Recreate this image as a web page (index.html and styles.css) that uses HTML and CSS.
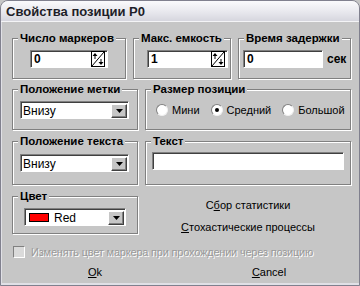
FILE: index.html
```html
<!DOCTYPE html>
<html lang="ru">
<head>
  <meta charset="UTF-8" />
  <title>Свойства позиции P0</title>
  <link rel="stylesheet" href="styles.css">
</head>
<body>

  <div class="window">
    <div class="titlebar">Свойства позиции P0</div>

    <div class="body">

      <!-- top row: three numeric fields -->
      <div class="row-top">
        <div class="group g-count">
          <div class="legend">Число маркеров</div>
          <div class="edit e-count">
            <span class="value">0</span>
            <svg class="spin" width="14" height="16" viewBox="0 0 14 16">
              <rect x="0.5" y="0.5" width="13" height="15" fill="#fff" stroke="#000"/>
              <line x1="1" y1="15" x2="13" y2="1" stroke="#000"/>
              <path d="M4 2 L1.5 5 H3.5 V8 H4.5 V5 H6.5 Z" fill="#000"/>
              <path d="M10 14 L7.5 11 H9.5 V8 H10.5 V11 H12.5 Z" fill="#000"/>
            </svg>
          </div>
        </div>
        <div class="group g-cap">
          <div class="legend">Макс. емкость</div>
          <div class="edit e-cap">
            <span class="value">1</span>
            <svg class="spin" width="14" height="16" viewBox="0 0 14 16">
              <rect x="0.5" y="0.5" width="13" height="15" fill="#fff" stroke="#000"/>
              <line x1="1" y1="15" x2="13" y2="1" stroke="#000"/>
              <path d="M4 2 L1.5 5 H3.5 V8 H4.5 V5 H6.5 Z" fill="#000"/>
              <path d="M10 14 L7.5 11 H9.5 V8 H10.5 V11 H12.5 Z" fill="#000"/>
            </svg>
          </div>
        </div>
        <div class="group g-delay">
          <div class="legend">Время задержки</div>
          <div class="inline">
            <div class="edit e-delay"><span class="value">0</span></div>
            <span class="unit">сек</span>
          </div>
        </div>
      </div>

      <!-- label position / size -->
      <div class="row-grid r2">
        <div class="group">
          <div class="legend">Положение метки</div>
          <div class="combo c-label">
            <span class="combo-text">Внизу</span>
            <span class="drop"><svg width="7" height="4" viewBox="0 0 7 4"><path d="M0 0 H7 L3.5 4 Z" fill="#000"/></svg></span>
          </div>
        </div>
        <div class="group">
          <div class="legend">Размер позиции</div>
          <div class="radios">
            <label class="radio"><span class="dot"></span>Мини</label>
            <label class="radio"><span class="dot on"></span>Средний</label>
            <label class="radio"><span class="dot"></span>Большой</label>
          </div>
        </div>
      </div>

      <!-- text position / text -->
      <div class="row-grid r3">
        <div class="group">
          <div class="legend">Положение текста</div>
          <div class="combo c-text">
            <span class="combo-text">Внизу</span>
            <span class="drop"><svg width="7" height="4" viewBox="0 0 7 4"><path d="M0 0 H7 L3.5 4 Z" fill="#000"/></svg></span>
          </div>
        </div>
        <div class="group">
          <div class="legend">Текст</div>
          <div class="edit e-text"></div>
        </div>
      </div>

      <!-- colour / links -->
      <div class="row-grid r4">
        <div class="group">
          <div class="legend">Цвет</div>
          <div class="combo c-color">
            <span class="swatch"></span>
            <span class="combo-text">Red</span>
            <span class="drop"><svg width="7" height="4" viewBox="0 0 7 4"><path d="M0 0 H7 L3.5 4 Z" fill="#000"/></svg></span>
          </div>
        </div>
        <div class="links">
          <div class="link">С<u>б</u>ор статистики</div>
          <div class="link"><u>С</u>тохастические процессы</div>
        </div>
      </div>

      <div class="check disabled">
        <span class="box"></span>
        <span class="check-text">Изменять цвет маркера при прохождении через позицию</span>
      </div>

      <div class="buttons">
        <div class="btn"><u>O</u>k</div>
        <div class="btn"><u>C</u>ancel</div>
      </div>

    </div>
  </div>

</body>
</html>
```

FILE: styles.css
```css
* {
  box-sizing: border-box;
}

body {
  margin: 0;
  font-family: 'Liberation Sans', Arial, sans-serif;
  font-size: 11px;
  color: #000;
  background: #c6c6c6;
}

.window {
  width: 360px;
  height: 286px;
  border: 1px solid #80808e;
  border-radius: 8px 8px 0 0;
  background: #c6c6c6;
  box-shadow: inset 0 -2px 0 #e0e0e6, inset 1px 0 0 #e0e0e6;
  overflow: hidden;
}

.titlebar {
  height: 21px;
  padding: 3px 0 0 5px;
  font-size: 13px;
  font-weight: bold;
  color: #1e1e28;
  background: linear-gradient(#fafafc, #e6e6ec 60%, #d6d6de);
  border-bottom: 1px solid #f4f4f6;
}

.body {
  padding: 16px 0 0 11px;
}

/* group boxes */
.group {
  border: 1px solid #808080;
  box-shadow: 1px 1px 0 #fff, inset 1px 1px 0 #fff;
}

.legend {
  width: max-content;
  margin: -8px 0 0 5px;
  padding: 0 2px;
  line-height: 14px;
  font-size: 11.5px;
  font-weight: bold;
  background: #c6c6c6;
}

.row-top {
  display: flex;
  height: 41px;
}

.row-top .group {
  height: 41px;
}

.g-count { width: 114px; }
.g-cap { width: 98px; margin-left: 7px; }
.g-delay { width: 113px; margin-left: 7px; }

.row-grid {
  display: grid;
  grid-template-columns: 126px 206px;
  column-gap: 7px;
}

.r2 { margin-top: 10px; height: 41px; }
.r3 { margin-top: 11px; height: 44px; }
.r4 { margin-top: 11px; height: 36px; }

/* sunken edit fields */
.edit {
  height: 18px;
  background: #fff;
  border: 1px solid;
  border-color: #808080 #fff #fff #808080;
  box-shadow: inset 1px 1px 0 #404040;
  display: flex;
  align-items: center;
}

.value {
  padding-left: 3px;
  font-size: 12px;
  font-weight: bold;
}

.spin {
  margin-left: auto;
  margin-right: 2px;
}

.e-count { width: 78px; margin: 5px 0 0 17px; }
.e-cap { width: 81px; margin: 5px 0 0 13px; }
.e-delay { width: 80px; }
.e-text { width: 192px; margin: 4px 0 0 6px; }

.inline {
  display: flex;
  align-items: center;
  margin: 5px 0 0 4px;
}

.unit {
  margin-left: 4px;
  font-size: 12px;
  font-weight: bold;
}

/* combo boxes */
.combo {
  height: 18px;
  background: #fff;
  border: 1px solid;
  border-color: #808080 #fff #fff #808080;
  box-shadow: inset 1px 1px 0 #404040;
  display: flex;
  align-items: center;
  padding: 1px 1px 0 2px;
  font-size: 12px;
}

.combo-text {
  flex: 1;
}

.drop {
  width: 16px;
  height: 14px;
  background: #c6c6c6;
  border: 1px solid;
  border-color: #fff #404040 #404040 #fff;
  box-shadow: inset -1px -1px 0 #808080;
  display: flex;
  align-items: center;
  justify-content: center;
}

.c-label { width: 109px; margin: 5px 0 0 7px; }
.c-text { width: 109px; margin: 6px 0 0 7px; }
.c-color { width: 102px; margin: 5px 0 0 11px; padding-left: 4px; }

.swatch {
  width: 20px;
  height: 9px;
  margin-right: 5px;
  background: #f00;
  border: 1px solid #000;
}

/* radio buttons */
.radios {
  display: flex;
  gap: 11px;
  margin: 8px 0 0 10px;
  font-size: 11px;
}

.radio {
  display: flex;
  align-items: center;
  gap: 4px;
  line-height: 12px;
}

.dot {
  width: 12px;
  height: 12px;
  border-radius: 50%;
  background: #fff;
  border: 1px solid;
  border-color: #808080 #f0f0f0 #f0f0f0 #808080;
  display: flex;
  align-items: center;
  justify-content: center;
}

.dot.on::after {
  content: "";
  width: 4px;
  height: 4px;
  border-radius: 50%;
  background: #000;
}

/* links */
.links {
  display: flex;
  flex-direction: column;
  align-items: center;
  gap: 8px;
  padding-top: 2px;
  font-size: 11px;
  line-height: 14px;
}

/* disabled checkbox */
.check {
  display: flex;
  align-items: center;
  gap: 6px;
  margin-top: 14px;
  margin-left: 1px;
  height: 12px;
}

.box {
  width: 12px;
  height: 12px;
  background: #dadada;
  border: 1px solid;
  border-color: #808080 #fff #fff #808080;
}

.check-text {
  color: #9a9a9a;
  text-shadow: 1px 1px 0 #fff;
  white-space: nowrap;
  letter-spacing: -0.2px;
}

/* buttons */
.buttons {
  display: flex;
  margin: 7px 0 0 39px;
  gap: 86px;
}

.btn {
  width: 88px;
  height: 14px;
  line-height: 14px;
  text-align: center;
  font-size: 11px;
}
```
